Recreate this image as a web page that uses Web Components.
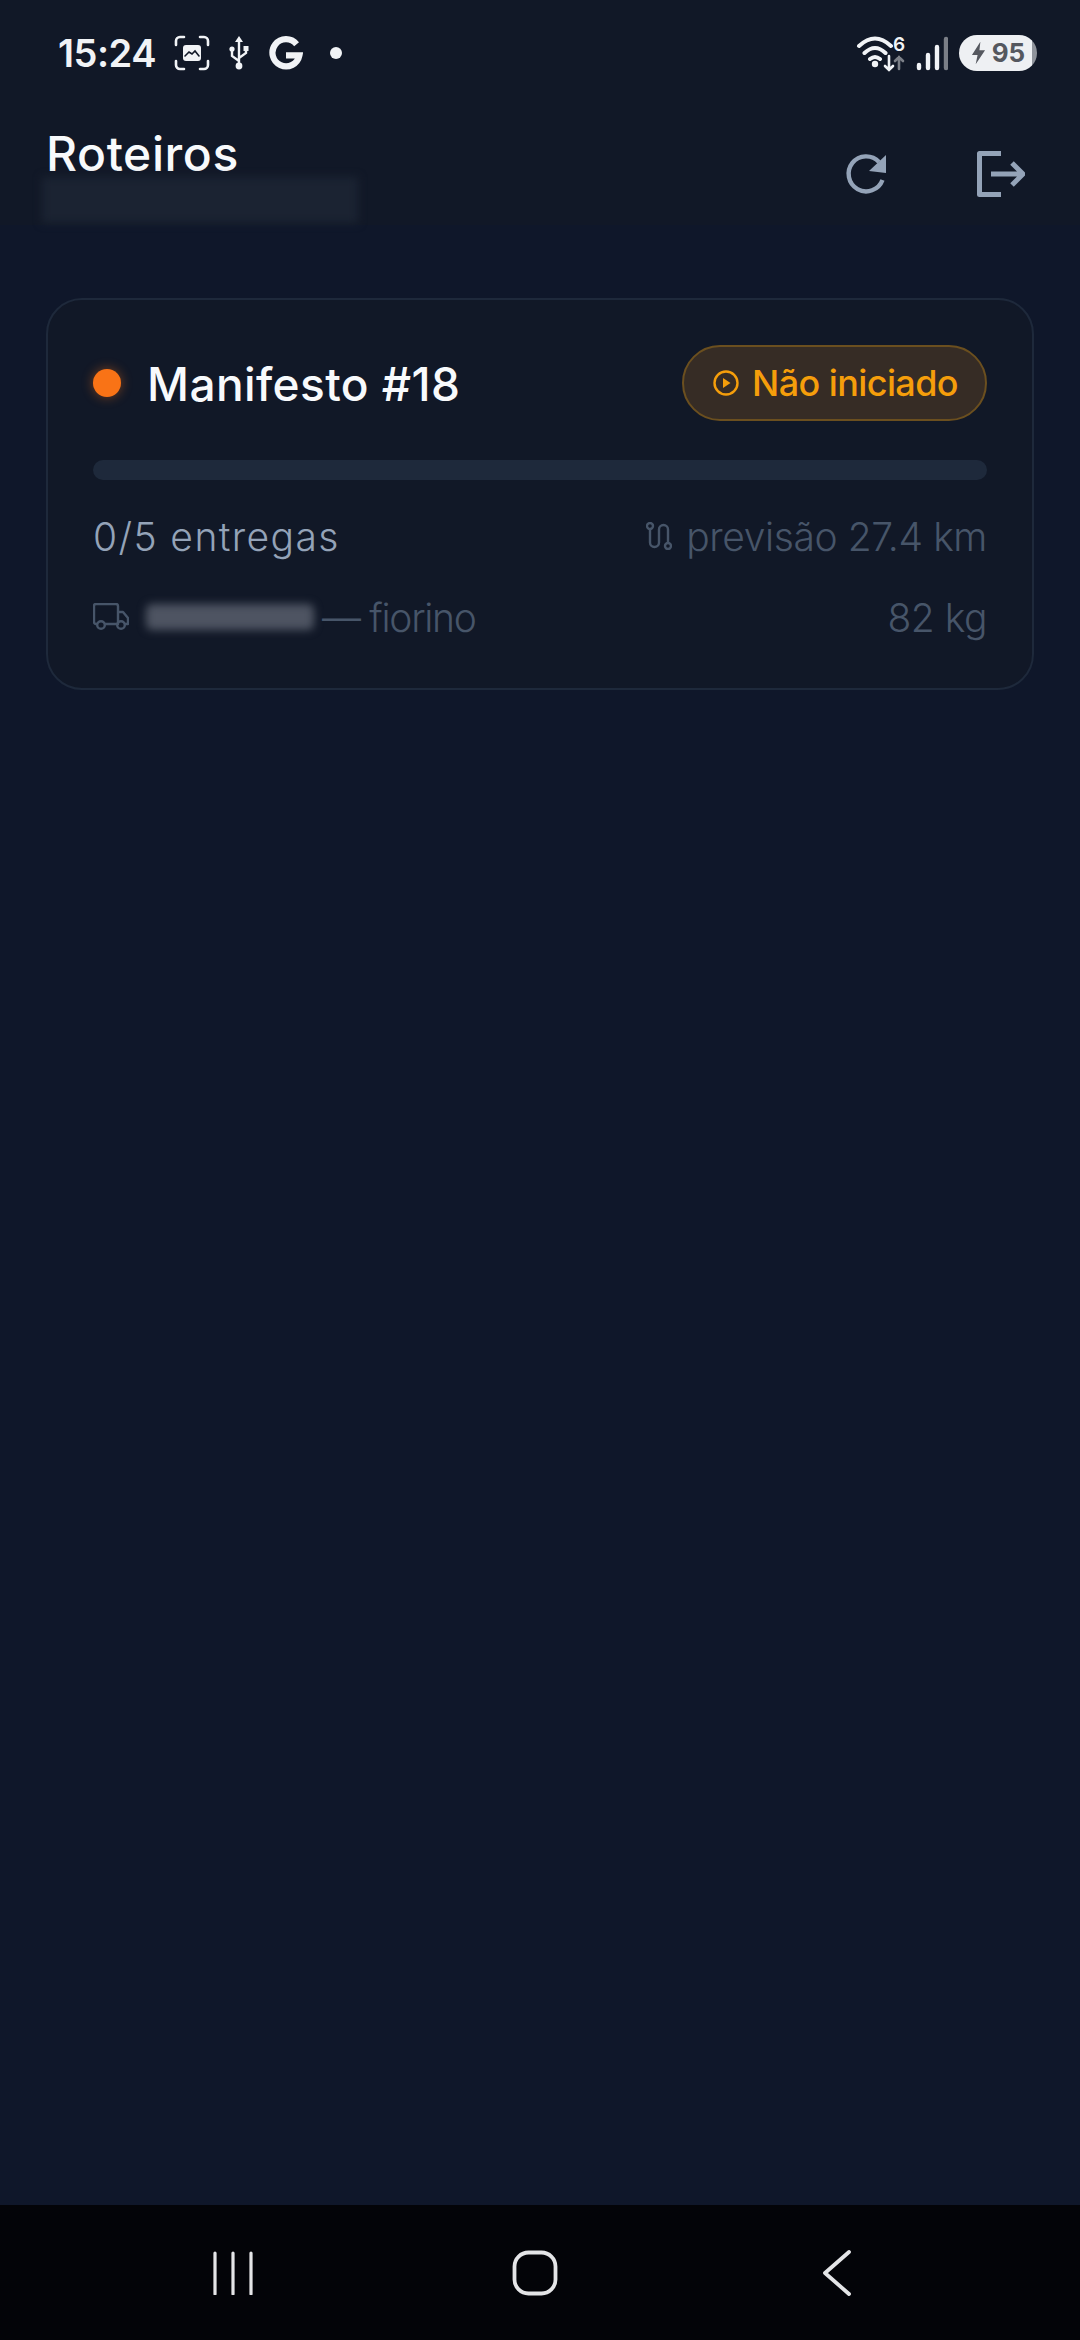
<!DOCTYPE html>
<html lang="pt">
<head>
<meta charset="utf-8">
<title>Roteiros</title>
<style>
    html, body { margin: 0; padding: 0; background: #0f172a; }
    body { font-family: "Inter", "Liberation Sans", sans-serif; }
</style>
</head>
<body>
<app-screen>
    <status-bar slot="status"></status-bar>
    <app-header slot="header" title="Roteiros"></app-header>
    <manifest-card title="Manifesto #18" status="Não iniciado" done="0/5 entregas"
        distance="previsão 27.4 km" vehicle="— fiorino" weight="82 kg"></manifest-card>
    <nav-bar slot="nav"></nav-bar>
</app-screen>
<script>
/**
 * Page frame: status bar, header, content and system navigation
 */
class AppScreen extends HTMLElement {
    connectedCallback() {
        const root = this.attachShadow({ mode: 'open' });
        root.innerHTML = `
            <style>
                :host {
                    display: flex;
                    flex-direction: column;
                    width: 1080px;
                    height: 2340px;
                    background: #0f172a;
                    overflow: hidden;
                }
                main {
                    flex: 1;
                    padding: 73px 46px 0;
                }
            </style>
            <slot name="status"></slot>
            <slot name="header"></slot>
            <main><slot></slot></main>
            <slot name="nav"></slot>
        `;
    }
}

/**
 * Android status bar
 */
class StatusBar extends HTMLElement {
    connectedCallback() {
        const root = this.attachShadow({ mode: 'open' });
        root.innerHTML = `
            <style>
                :host {
                    display: flex;
                    align-items: center;
                    height: 105px;
                    padding: 0 43px 0 58px;
                    background: #111827;
                    color: #f1f3f6;
                    font-family: "Inter", sans-serif;
                }
                .time { font-size: 38px; font-weight: 600; letter-spacing: -0.5px; width: 116px; }
                .left, .right { display: flex; align-items: center; }
                .right { margin-left: auto; }
                svg { display: block; }
                .battery {
                    display: flex;
                    align-items: center;
                    justify-content: center;
                    gap: 6px;
                    width: 78px;
                    height: 36px;
                    margin-left: 11px;
                    border-radius: 18px;
                    overflow: hidden;
                    background: linear-gradient(90deg, #eef0f3 94%, #8f939b 94%);
                    color: #55585f;
                    font-size: 26px;
                    font-weight: 700;
                }
            </style>
            <div class="time">15:24</div>
            <div class="left">
                <svg width="36" height="36" viewBox="0 0 36 36" fill="none" stroke="#f1f3f6" stroke-width="2.6" stroke-linecap="round">
                    <path d="M2 10V6a4 4 0 0 1 4-4h4M26 2h4a4 4 0 0 1 4 4v4M34 26v4a4 4 0 0 1-4 4h-4M10 34H6a4 4 0 0 1-4-4v-4"/>
                    <rect x="9" y="10" width="18" height="16" rx="3" fill="#f1f3f6" stroke="none"/>
                    <path d="M11 21l4-4 3 2 3-3 4 5" stroke="#111827" stroke-width="1.6"/>
                </svg>
                <svg style="margin-left:17px" width="24" height="34" viewBox="0 0 24 34" fill="none" stroke="#f1f3f6" stroke-width="2.4" stroke-linecap="round">
                    <path d="M12 3v27M12 25l-7-5v-5M12 22l7-5v-3"/>
                    <path d="M12 0l4 6H8z" fill="#f1f3f6" stroke="none"/>
                    <circle cx="12" cy="30" r="3.4" fill="#f1f3f6" stroke="none"/>
                    <circle cx="5" cy="13" r="2.6" fill="#f1f3f6" stroke="none"/>
                    <rect x="16.5" y="10" width="5" height="5" fill="#f1f3f6" stroke="none"/>
                </svg>
                <svg style="margin-left:18px" width="34" height="34" viewBox="0 0 34 34" fill="none" stroke="#f1f3f6" stroke-width="6.2">
                    <path d="M27.6 8.2A13.6 13.6 0 1 0 30.4 19.4H17"/>
                </svg>
                <svg style="margin-left:27px" width="12" height="12" viewBox="0 0 12 12"><circle cx="6" cy="6" r="6" fill="#f1f3f6"/></svg>
            </div>
            <div class="right">
                <svg width="50" height="38" viewBox="0 0 50 38" fill="none" stroke-linecap="round">
                    <path d="M3 12Q19 -3 35 12M8.5 19Q19 9 29.5 19M14 25Q19 21 24 25" stroke="#f1f3f6" stroke-width="4"/>
                    <circle cx="19" cy="30" r="3.2" fill="#f1f3f6"/>
                    <path d="M33 22v14M29 32l4 4 4-4" stroke="#f1f3f6" stroke-width="2.6"/>
                    <path d="M43 35V23M39 27l4-4 4 4" stroke="#7b7f87" stroke-width="2.6"/>
                    <text x="37" y="17" font-family="Inter, sans-serif" font-size="19" font-weight="600" fill="#f1f3f6">6</text>
                </svg>
                <svg style="margin-left:10px" width="32" height="36" viewBox="0 0 32 36" fill="none" stroke-linecap="round" stroke-width="4.4">
                    <path d="M3 30v3M12 20v13M21 12v21" stroke="#f1f3f6"/>
                    <path d="M30 4v29" stroke="#7b7f87"/>
                </svg>
                <div class="battery">
                    <svg width="15" height="24" viewBox="0 0 16 24"><path d="M10 0L1 14h6l-2 10 10-15H9z" fill="#55585f"/></svg>
                    <span>95</span>
                </div>
            </div>
        `;
    }
}

/**
 * Screen title with refresh and logout actions
 */
class AppHeader extends HTMLElement {
    connectedCallback() {
        const root = this.attachShadow({ mode: 'open' });
        root.innerHTML = `
            <style>
                :host {
                    display: flex;
                    align-items: center;
                    justify-content: space-between;
                    padding: 28px 55px 0 46px;
                    background: #111827;
                    color: #f8fafc;
                    font-family: "Inter", sans-serif;
                }
                h1 { margin: 0; font-size: 48px; font-weight: 500; line-height: 42px; letter-spacing: 0.6px; }
                .sub {
                    width: 316px;
                    height: 46px;
                    margin: 2px 0 2px -4px;
                    background: #1b2332;
                    filter: blur(4px);
                }
                .actions { display: flex; align-items: center; gap: 86px; margin-bottom: 10px; }
                svg { display: block; }
            </style>
            <div>
                <h1>${this.getAttribute('title')}</h1>
                <div class="sub"></div>
            </div>
            <div class="actions">
                <svg width="48" height="48" viewBox="0 0 48 48" fill="none">
                    <path d="M39.5 30A17.5 17.5 0 1 1 36 12" stroke="#94a3b8" stroke-width="4.4"/>
                    <path d="M43 5v18L26 21z" fill="#94a3b8"/>
                </svg>
                <svg width="48" height="48" viewBox="0 0 48 48" fill="none" stroke="#94a3b8" stroke-width="5" stroke-linejoin="round">
                    <path d="M24 3.5H2.5v41H24"/>
                    <path d="M14 24h31M35 13l11 11-11 11"/>
                </svg>
            </div>
        `;
    }
}

/**
 * Delivery manifest summary card
 */
class ManifestCard extends HTMLElement {
    connectedCallback() {
        const root = this.attachShadow({ mode: 'open' });
        root.innerHTML = `
            <style>
                :host {
                    display: block;
                    box-sizing: border-box;
                    height: 392px;
                    padding: 45px 45px 0;
                    border: 2px solid #1e293b;
                    border-radius: 36px;
                    background: #111827;
                    font-family: "Inter", sans-serif;
                }
                .top { display: flex; align-items: center; justify-content: space-between; height: 76px; }
                .name { display: flex; align-items: center; gap: 26px; }
                .dot {
                    width: 28px;
                    height: 28px;
                    border-radius: 50%;
                    background: #f97316;
                    box-shadow: 0 0 12px rgba(249, 115, 22, 0.45);
                }
                h2 { margin: 2px 0 0; color: #f8fafc; font-size: 46px; font-weight: 500; letter-spacing: 0.4px; }
                .pill {
                    display: flex;
                    align-items: center;
                    gap: 13px;
                    box-sizing: border-box;
                    height: 76px;
                    padding: 0 27px 0 29px;
                    border: 2px solid #6b4f1f;
                    border-radius: 38px;
                    background: #362c25;
                    color: #f59e0b;
                    font-size: 36px;
                    font-weight: 500;
                    letter-spacing: -0.6px;
                }
                .bar { height: 20px; margin-top: 39px; border-radius: 10px; background: #1e293b; }
                .row { display: flex; align-items: center; justify-content: space-between; font-weight: 300; font-size: 39px; }
                .r1 { margin-top: 33px; height: 46px; color: #94a3b8; }
                .r2 { margin-top: 35px; height: 46px; color: #475569; }
                .r1 .done { letter-spacing: 1.4px; }
                .r1 .right { color: #475569; letter-spacing: -0.4px; }
                .vehicle { letter-spacing: -1.3px; }
                .weight { letter-spacing: -0.5px; }
                .cell { display: flex; align-items: center; }
                svg { display: block; }
                .smear {
                    width: 168px;
                    height: 26px;
                    margin: 0 8px 0 17px;
                    border-radius: 6px;
                    background: #4e5462;
                    filter: blur(4px);
                }
            </style>
            <div class="top">
                <div class="name"><span class="dot"></span><h2>${this.getAttribute('title')}</h2></div>
                <div class="pill">
                    <svg width="26" height="26" viewBox="0 0 26 26" fill="none" stroke="#f59e0b" stroke-width="2.4">
                        <circle cx="13" cy="13" r="11.5"/>
                        <path d="M10 8l7.5 5-7.5 5z" fill="#f59e0b" stroke="none"/>
                    </svg>
                    <span>${this.getAttribute('status')}</span>
                </div>
            </div>
            <div class="bar"></div>
            <div class="row r1">
                <span class="done">${this.getAttribute('done')}</span>
                <span class="cell right">
                    <svg style="margin-right:14px" width="26" height="28" viewBox="0 0 26 28" fill="none" stroke="#475569" stroke-width="2.4">
                        <circle cx="4" cy="4" r="3"/>
                        <circle cx="22" cy="24" r="3"/>
                        <path d="M4 7v13.500a4.500 4.500 0 0 0 9 0V7.500a4.500 4.500 0 0 1 9 0V21"/>
                    </svg>
                    ${this.getAttribute('distance')}
                </span>
            </div>
            <div class="row r2">
                <span class="cell vehicle">
                    <svg width="36" height="28" viewBox="0 0 36 28" fill="none" stroke="#475569" stroke-width="2.4" stroke-linejoin="round">
                        <path d="M4 21H3a2 2 0 0 1-2-2V3a2 2 0 0 1 2-2h20a2 2 0 0 1 2 2v18H12"/>
                        <path d="M25 9h5l5 6v6h-3"/>
                        <circle cx="8" cy="22" r="3.800"/>
                        <circle cx="28" cy="22" r="3.800"/>
                    </svg>
                    <span class="smear"></span>
                    ${this.getAttribute('vehicle')}
                </span>
                <span class="weight">${this.getAttribute('weight')}</span>
            </div>
        `;
    }
}

/**
 * Android three button navigation
 */
class NavBar extends HTMLElement {
    connectedCallback() {
        const root = this.attachShadow({ mode: 'open' });
        root.innerHTML = `
            <style>
                :host {
                    display: grid;
                    grid-template-columns: repeat(3, 302px);
                    align-items: center;
                    justify-items: center;
                    box-sizing: border-box;
                    height: 135px;
                    padding: 0 0 44px 82px;
                    align-content: end;
                    background: #030408;
                }
                svg { display: block; }
            </style>
            <svg width="50" height="44" viewBox="0 0 50 44" stroke="#e4e5e7" stroke-width="3.2" stroke-linecap="round">
                <path d="M7 2v41M25 2v41M43 2v41"/>
            </svg>
            <svg width="46" height="46" viewBox="0 0 46 46" fill="none" stroke="#e4e5e7" stroke-width="3.800">
                <rect x="2.500" y="2.500" width="41" height="41" rx="14"/>
            </svg>
            <svg width="28" height="46" viewBox="0 0 28 46" fill="none" stroke="#e4e5e7" stroke-width="3.800" stroke-linecap="round" stroke-linejoin="round">
                <path d="M26 2L2 23l24 21"/>
            </svg>
        `;
    }
}

customElements.define('app-screen', AppScreen);
customElements.define('status-bar', StatusBar);
customElements.define('app-header', AppHeader);
customElements.define('manifest-card', ManifestCard);
customElements.define('nav-bar', NavBar);
</script>
</body>
</html>
